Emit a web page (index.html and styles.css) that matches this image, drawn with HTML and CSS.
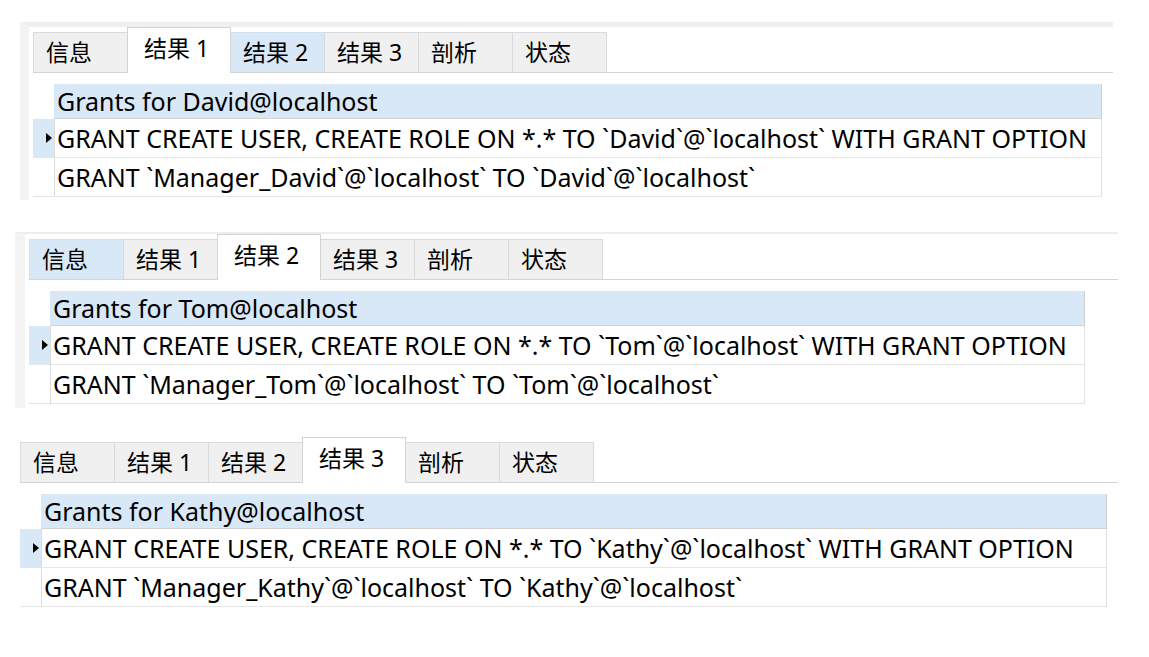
FILE: index.html
```html
<!DOCTYPE html>
<html lang="zh">
<head>
<meta charset="utf-8">
<title>Grants</title>
<link rel="stylesheet" href="styles.css">
</head>
<body>
<section class="pane pane-1">
  <div class="tabs">
    <div class="tab">信息</div>
    <div class="tab active">结果 1</div>
    <div class="tab hover">结果 2</div>
    <div class="tab">结果 3</div>
    <div class="tab">剖析</div>
    <div class="tab">状态</div>
  </div>
  <div class="grid grid-1">
    <div class="ind"></div><div class="cell head">Grants for David@localhost</div>
    <div class="ind cur"><span class="arrow"></span></div><div class="cell">GRANT CREATE USER, CREATE ROLE ON *.* TO `David`@`localhost` WITH GRANT OPTION</div>
    <div class="ind"></div><div class="cell">GRANT `Manager_David`@`localhost` TO `David`@`localhost`</div>
  </div>
</section>

<section class="pane pane-2">
  <div class="tabs">
    <div class="tab hover">信息</div>
    <div class="tab">结果 1</div>
    <div class="tab active">结果 2</div>
    <div class="tab">结果 3</div>
    <div class="tab">剖析</div>
    <div class="tab">状态</div>
  </div>
  <div class="grid grid-2">
    <div class="ind"></div><div class="cell head">Grants for Tom@localhost</div>
    <div class="ind cur"><span class="arrow"></span></div><div class="cell">GRANT CREATE USER, CREATE ROLE ON *.* TO `Tom`@`localhost` WITH GRANT OPTION</div>
    <div class="ind"></div><div class="cell">GRANT `Manager_Tom`@`localhost` TO `Tom`@`localhost`</div>
  </div>
</section>

<section class="pane pane-3">
  <div class="tabs">
    <div class="tab">信息</div>
    <div class="tab">结果 1</div>
    <div class="tab">结果 2</div>
    <div class="tab active">结果 3</div>
    <div class="tab">剖析</div>
    <div class="tab">状态</div>
  </div>
  <div class="grid grid-3">
    <div class="ind"></div><div class="cell head">Grants for Kathy@localhost</div>
    <div class="ind cur"><span class="arrow"></span></div><div class="cell">GRANT CREATE USER, CREATE ROLE ON *.* TO `Kathy`@`localhost` WITH GRANT OPTION</div>
    <div class="ind"></div><div class="cell">GRANT `Manager_Kathy`@`localhost` TO `Kathy`@`localhost`</div>
  </div>
</section>
</body>
</html>
```

FILE: styles.css
```css
html, body {
  margin: 0;
  padding: 0;
  background: #ffffff;
}

body {
  font-family: "Noto Sans", "Noto Sans CJK SC", sans-serif;
  color: #000000;
}

.pane {
  display: flex;
  flex-direction: column;
  box-sizing: border-box;
}

.pane-1 {
  margin: 22px 0 0 20px;
  width: 1093px;
  border-top: 5px solid #efefef;
  border-left: 9px solid #f3f3f3;
  padding: 0 0 3px 4px;
}

.pane-2 {
  margin: 32px 0 0 15px;
  width: 1103px;
  border-top: 2px solid #ededed;
  border-left: 10px solid #f3f3f3;
  padding: 0 0 4px 4px;
}

.pane-3 {
  margin: 29px 0 0 20px;
  width: 1098px;
}

.tabs {
  display: flex;
  align-items: flex-end;
  height: 45px;
  border-bottom: 1px solid #d4d4d4;
}

.tab {
  box-sizing: border-box;
  width: 95px;
  height: 40px;
  margin-right: -1px;
  padding-left: 12px;
  display: flex;
  align-items: center;
  background: #f0f0f0;
  border: 1px solid #dadada;
  border-bottom: none;
  font-size: 23px;
  line-height: 1;
  white-space: nowrap;
}

.tab.hover {
  background: #d9e8f6;
  border-color: #d3e2f1;
}

.tab.active {
  position: relative;
  z-index: 1;
  width: 104px;
  height: 46px;
  margin-bottom: -1px;
  padding-left: 16px;
  padding-bottom: 4px;
  background: #ffffff;
  border-color: #d4d4d4;
}

.grid {
  margin-top: 11px;
  display: grid;
  grid-template-columns: 21px 1fr;
  font-size: 25px;
  line-height: 1;
}

.grid-1 { width: 1069px; }
.grid-2 { width: 1056px; }
.grid-3 { width: 1087px; }

.ind {
  box-sizing: border-box;
  height: 39px;
  display: flex;
  align-items: center;
  justify-content: flex-end;
  padding-right: 2px;
  border-bottom: 1px solid #e6e6e6;
}

.ind:first-child {
  height: 35px;
  border-bottom-color: transparent;
}

.ind.cur {
  background: #d9e8f6;
}

.arrow {
  width: 0;
  height: 0;
  border-top: 5px solid transparent;
  border-bottom: 5px solid transparent;
  border-left: 6px solid #000000;
}

.cell {
  box-sizing: border-box;
  height: 39px;
  padding-left: 2px;
  display: flex;
  align-items: center;
  white-space: nowrap;
  border-left: 1px solid #dcdcdc;
  border-right: 1px solid #e2e2e2;
  border-bottom: 1px solid #e6e6e6;
}

.cell.head {
  height: 35px;
  background: #d9e8f6;
  border-left-color: #d9e8f6;
  border-right-color: #d0d0d0;
  border-bottom-color: #d3d3d3;
}
```
